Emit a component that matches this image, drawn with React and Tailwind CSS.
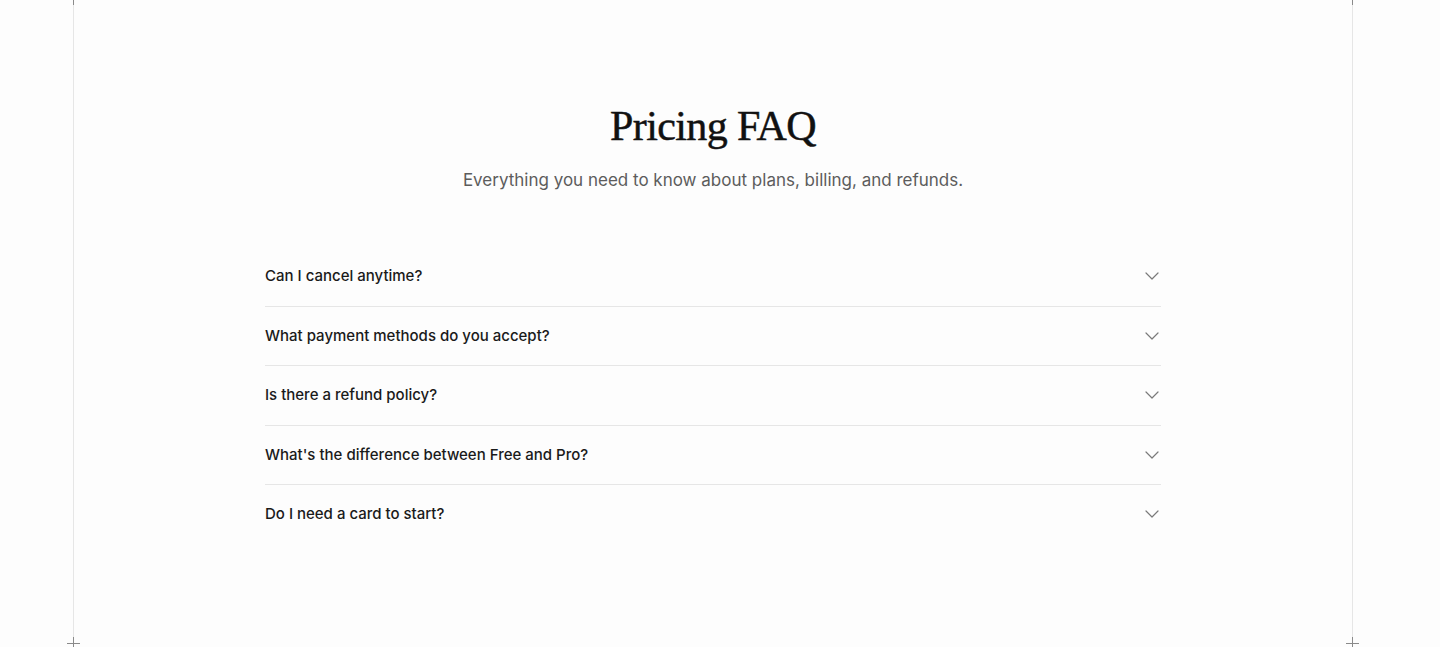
import React, { useState } from 'react';

const faqs = [
    { q: "Can I cancel anytime?", a: "Yes. You can cancel your subscription at any time from your account settings, and you'll keep access until the end of the billing period." },
    { q: "What payment methods do you accept?", a: "We accept all major credit cards, Apple Pay, Google Pay and PayPal." },
    { q: "Is there a refund policy?", a: "If you're not happy within the first 14 days, contact us for a full refund." },
    { q: "What's the difference between Free and Pro?", a: "Pro unlocks unlimited projects, priority support and advanced analytics." },
    { q: "Do I need a card to start?", a: "No card is required to start on the Free plan." },
];

const Chevron = ({ open }) => (
    <svg
        width="14"
        height="8"
        viewBox="0 0 14 8"
        fill="none"
        className={open ? "rotate-180 transition-transform" : "transition-transform"}
    >
        <path d="M1 1l6 6 6-6" stroke="#7a7a7a" strokeWidth="1.2" strokeLinecap="round" strokeLinejoin="round" />
    </svg>
);

// corner crosshair marks on the frame
const Plus = ({ className }) => (
    <svg width="13" height="13" viewBox="0 0 13 13" className={`absolute ${className}`}>
        <path d="M6.5 0v13M0 6.5h13" stroke="#8a8a8a" strokeWidth="1" />
    </svg>
);

export default function App() {
    const [open, setOpen] = useState(null);

    return (
        <main className="min-h-screen bg-[#fdfdfd] pr-[14px] overflow-hidden">
            <div className="relative max-w-[1280px] h-[643px] mx-auto border-x border-[#e6e6e6]">
                <Plus className="-top-[8px] -left-[7px]" />
                <Plus className="-top-[8px] -right-[7px]" />
                <Plus className="-bottom-[7px] -left-[7px]" />
                <Plus className="-bottom-[7px] -right-[7px]" />

                <div className="pt-[103px] flex flex-col items-center">
                    <h1 className="text-[42px] leading-[46px] tracking-[-0.015em] text-[#111] [-webkit-text-stroke:0.5px_#111] font-['Liberation_Serif',serif]">
                        Pricing FAQ
                    </h1>
                    <p className="mt-[17px] text-[17px] leading-[28px] text-[#5c5c5c] font-['Inter',sans-serif]">
                        Everything you need to know about plans, billing, and refunds.
                    </p>

                    <div className="mt-[53px] w-full max-w-[896px] divide-y divide-[#e6e6e6]">
                        {faqs.map((item, i) => (
                            <div key={item.q}>
                                <button
                                    onClick={() => setOpen(open === i ? null : i)}
                                    className="w-full flex items-center justify-between py-5 text-left"
                                >
                                    <span className="text-[15px] leading-[18.5px] font-medium text-[#1a1a1a] font-['Inter',sans-serif]">
                                        {item.q}
                                    </span>
                                    <span className="mr-[2px]">
                                        <Chevron open={open === i} />
                                    </span>
                                </button>
                                {open === i && (
                                    <p className="pb-5 text-[15px] leading-6 text-[#5c5c5c] font-['Inter',sans-serif]">{item.a}</p>
                                )}
                            </div>
                        ))}
                    </div>
                </div>
            </div>
        </main>
    );
}
